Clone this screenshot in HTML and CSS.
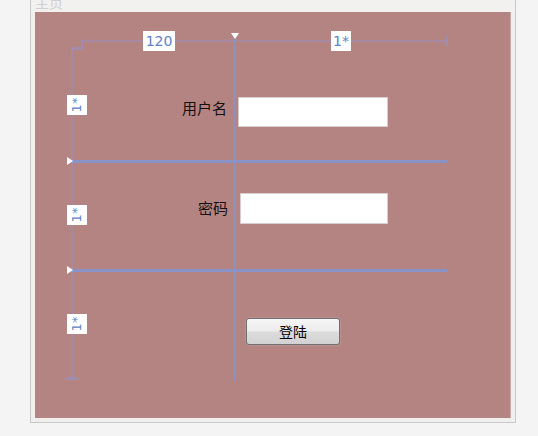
FILE: index.html
```html
<!DOCTYPE html>
<html lang="zh">
<head>
<meta charset="utf-8">
<title>主页</title>
<link rel="stylesheet" href="styles.css">
</head>
<body>
<div class="window">
  <div class="titlebar"><span class="title">主页</span></div>
  <div class="surface">
    <div class="form">
      <div class="label l1">用户名</div>
      <div class="textbox t1"></div>
      <div class="label l2">密码</div>
      <div class="textbox t2"></div>
      <div class="button b1">登陆</div>
    </div>

    <div class="ruler-top"></div>
    <div class="ruler-left"></div>
    <div class="corner-h"></div>
    <div class="corner-v"></div>
    <div class="ruler-top-end"></div>
    <div class="ruler-left-end"></div>

    <div class="col-line"></div>
    <div class="row-line r1"></div>
    <div class="row-line r2"></div>

    <div class="marker-down"></div>
    <div class="marker-right m1"></div>
    <div class="marker-right m2"></div>

    <div class="size-tag top w120">120</div>
    <div class="size-tag top star">1*</div>
    <div class="size-tag side s1"><span>1*</span></div>
    <div class="size-tag side s2"><span>1*</span></div>
    <div class="size-tag side s3"><span>1*</span></div>
  </div>
</div>
</body>
</html>
```

FILE: styles.css
```css
html, body {
  margin: 0;
  padding: 0;
  background: #f4f4f4;
  font-family: "Noto Sans CJK SC", "Liberation Sans", sans-serif;
  overflow: hidden;
}

.window {
  margin-left: 30px;
  width: 484px;
  height: 422px;
  border: 1px solid #c9c9c9;
  border-top: none;
  background: #f1efee;
  display: flex;
  flex-direction: column;
}

.titlebar {
  height: 12px;
  overflow: hidden;
  padding-left: 4px;
  background: #f3f1f0;
}

.title {
  display: block;
  margin-top: -8px;
  font-size: 14px;
  line-height: 20px;
  color: #cfcfcf;
}

.surface {
  position: relative;
  margin-left: 4px;
  width: 475px;
  height: 406px;
  background: #b48482;
  border-right: 1px solid #c9a9a8;
}

.form {
  margin-left: 47px;
  padding-top: 40px;
  display: grid;
  grid-template-columns: 152px 213px;
  grid-template-rows: repeat(3, 109px);
}

.label {
  justify-self: end;
  align-self: start;
  font-size: 15px;
  line-height: 20px;
  color: #141010;
}

.l1 { grid-column: 1; grid-row: 1; margin-top: 46px; margin-right: 7px; }
.l2 { grid-column: 1; grid-row: 2; margin-top: 37px; margin-right: 6px; }

.textbox {
  align-self: start;
  background: #ffffff;
  border: 1px solid #d9cccc;
  box-sizing: border-box;
}

.t1 { grid-column: 2; grid-row: 1; margin-top: 45px; margin-left: 4px; width: 150px; height: 30px; }
.t2 { grid-column: 2; grid-row: 2; margin-top: 32px; margin-left: 6px; width: 148px; height: 31px; }

.button {
  grid-column: 2;
  grid-row: 3;
  align-self: start;
  justify-self: start;
  margin-top: 48px;
  margin-left: 12px;
  width: 94px;
  height: 27px;
  box-sizing: border-box;
  border: 1px solid #707070;
  border-radius: 3px;
  background: linear-gradient(#f6f6f6 0%, #ececec 48%, #dcdcdc 52%, #d2d2d2 100%);
  font-size: 14px;
  line-height: 24px;
  text-align: center;
  color: #000;
  box-shadow: 0 0 2px rgba(255,255,255,0.35);
}

/* design-time adorners overlaying the grid */
.ruler-top {
  position: absolute;
  left: 47px;
  top: 28px;
  width: 365px;
  height: 2px;
  background: rgba(150, 145, 200, 0.45);
}

.ruler-left {
  position: absolute;
  left: 36px;
  top: 36px;
  width: 2px;
  height: 331px;
  background: rgba(150, 145, 200, 0.45);
}

.corner-h {
  position: absolute;
  left: 36px;
  top: 35px;
  width: 11px;
  height: 3px;
  background: rgba(150, 145, 200, 0.6);
}

.corner-v {
  position: absolute;
  left: 46px;
  top: 27px;
  width: 2px;
  height: 10px;
  background: rgba(150, 145, 200, 0.6);
}

.ruler-top-end {
  position: absolute;
  left: 410px;
  top: 24px;
  width: 3px;
  height: 10px;
  background: rgba(150, 145, 200, 0.6);
}

.ruler-left-end {
  position: absolute;
  left: 31px;
  top: 365px;
  width: 12px;
  height: 3px;
  background: rgba(150, 145, 200, 0.6);
}

.col-line {
  position: absolute;
  left: 198px;
  top: 24px;
  width: 3px;
  height: 345px;
  background: #8d8fc1;
}

.row-line {
  position: absolute;
  left: 34px;
  width: 378px;
  height: 3px;
  background: #8a93c8;
}
.r1 { top: 148px; }
.r2 { top: 257px; }

.marker-down {
  position: absolute;
  left: 196px;
  top: 21px;
  width: 0;
  height: 0;
  border-left: 4px solid transparent;
  border-right: 4px solid transparent;
  border-top: 6px solid #ffffff;
}

.marker-right {
  position: absolute;
  left: 32px;
  width: 0;
  height: 0;
  border-top: 4px solid transparent;
  border-bottom: 4px solid transparent;
  border-left: 6px solid #ffffff;
}
.m1 { top: 145px; }
.m2 { top: 254px; }

.size-tag {
  position: absolute;
  background: #ffffff;
  color: #5f82c8;
  font-family: "DejaVu Sans", "Liberation Sans", sans-serif;
  font-size: 14px;
  line-height: 20px;
  text-align: center;
  height: 20px;
}

.top { top: 19px; }
.w120 { left: 108px; width: 32px; }
.star { left: 296px; width: 20px; }

.side {
  left: 32px;
  width: 20px;
  display: flex;
  align-items: center;
  justify-content: center;
}
.side span {
  display: block;
  transform: rotate(-90deg);
  font-size: 13px;
}
.s1 { top: 83px; }
.s2 { top: 193px; }
.s3 { top: 302px; }
```
